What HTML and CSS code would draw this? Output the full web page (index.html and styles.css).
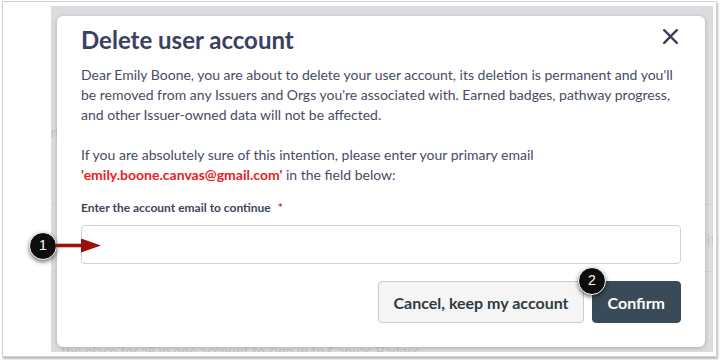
FILE: index.html
```html
<!DOCTYPE html>
<html lang="en">
<head>
<meta charset="utf-8">
<title>Delete user account</title>
<link rel="stylesheet" href="styles.css">
</head>
<body>
<div class="frame">
  <div class="overlay">
    <div class="bg-page">
      <div class="bg-word">in</div>
      <div class="bg-field"><span class="bg-field-text">if</span></div>
      <div class="bg-foot">the place for all in one account to sign in to Canvas Badges.</div>
    </div>
    <div class="modal">
      <div class="modal-head">
        <h1 class="title">Delete user account</h1>
        <button class="close" aria-label="Close">
          <svg width="15" height="15" viewBox="0 0 15 15"><path d="M1.2 1.2 L13.8 13.8 M13.8 1.2 L1.2 13.8" stroke="#3a4062" stroke-width="2.4" stroke-linecap="round" fill="none"/></svg>
        </button>
      </div>
      <p class="text">Dear Emily Boone, you are about to delete your user account, its deletion is permanent and you'll be removed from any Issuers and Orgs you're associated with. Earned badges, pathway progress, and other Issuer-owned data will not be affected.</p>
      <p class="text text-gap">If you are absolutely sure of this intention, please enter your primary email <strong class="email">'emily.boone.canvas@gmail.com'</strong> in the field below:</p>
      <label class="label" for="em">Enter the account email to continue <span class="req">*</span></label>
      <input class="field" id="em" type="text">
      <div class="actions">
        <button class="btn btn-cancel">Cancel, keep my account</button>
        <button class="btn btn-confirm">Confirm</button>
      </div>
    </div>
  </div>
</div>
<div class="badge badge-1">1</div>
<svg class="arrow" width="46" height="18" viewBox="0 0 46 18"><path d="M0 8.5 H28" stroke="#9b0f0f" stroke-width="3.6" fill="none"/><path d="M25 1.5 L45 8.5 L25 15.5 Z" fill="#9b0f0f"/></svg>
<div class="badge badge-2">2</div>
</body>
</html>
```
FILE: styles.css
```css
html, body {
  margin: 0;
  padding: 0;
  background: #ffffff;
}
body {
  font-family: Lato, "Open Sans", sans-serif;
  width: 720px;
  height: 360px;
  position: relative;
  overflow: hidden;
}
.frame {
  margin: 1px 0 0 2px;
  width: 715px;
  height: 356px;
  box-sizing: border-box;
  border: 1px solid #d2d2d2;
  box-shadow: 1px 2px 2px rgba(0, 0, 0, 0.28);
  padding: 4px 3px 4px 48px;
  background: #ffffff;
}
.overlay {
  position: relative;
  height: 100%;
  background: #dbdcdf;
  overflow: hidden;
}
.bg-page {
  display: flex;
  flex-direction: column;
  height: 100%;
  color: #c3c4c8;
  font-size: 15px;
}
.bg-word {
  margin: 116px 0 0 -4px;
  line-height: 20px;
}
.bg-field {
  margin: 62px 0 0 -20px;
  height: 66px;
  border-top: 1px solid #d0d1d4;
  border-bottom: 1px solid #d0d1d4;
  display: flex;
  align-items: center;
  justify-content: flex-end;
}
.bg-field-text {
  margin-right: -3px;
  font-size: 16px;
}
.bg-foot {
  margin: auto 0 -7px 10px;
  line-height: 16px;
  font-size: 14px;
}
.modal {
  position: absolute;
  left: 6px;
  top: 10px;
  right: 8px;
  bottom: 5px;
  background: #ffffff;
  border-radius: 6px;
  box-shadow: 0 1px 4px rgba(0, 0, 0, 0.22);
  padding: 9px 24px 24px 24px;
  display: flex;
  flex-direction: column;
  box-sizing: border-box;
}
.modal-head {
  display: flex;
  justify-content: space-between;
  align-items: flex-start;
}
.title {
  margin: 0;
  font-size: 24px;
  line-height: 30px;
  font-weight: 700;
  color: #3a4062;
}
.close {
  width: 22px;
  height: 22px;
  margin: 0;
  padding: 0;
  border: 0;
  background: transparent;
  display: flex;
  align-items: center;
  justify-content: center;
}
.text {
  margin: 10px 0 0 0;
  font-size: 14px;
  line-height: 20px;
  color: #474c63;
}
.text-gap {
  margin-top: 20px;
}
.email {
  color: #e8211e;
  font-weight: 700;
}
.label {
  margin-top: 15px;
  font-size: 12px;
  line-height: 16px;
  font-weight: 700;
  color: #3f4560;
}
.req {
  color: #e8211e;
  margin-left: 4px;
}
.field {
  margin: 9px 0 0 0;
  height: 39px;
  box-sizing: border-box;
  border: 1px solid #cfd3d9;
  border-radius: 4px;
  background: #ffffff;
  padding: 0 10px;
  font: inherit;
}
.actions {
  margin-top: 17px;
  display: flex;
  justify-content: flex-end;
  gap: 8px;
}
.btn {
  height: 42px;
  box-sizing: border-box;
  padding: 0 15px;
  border-radius: 4px;
  font-family: Lato, "Open Sans", sans-serif;
  font-size: 16px;
  font-weight: 700;
}
.btn-cancel {
  padding: 0 14px;
  background: #f5f5f5;
  border: 1px solid #c7cdd1;
  color: #2d3b45;
}
.btn-confirm {
  background: #394b58;
  border: 1px solid #394b58;
  color: #ffffff;
}
.badge {
  position: absolute;
  width: 28px;
  height: 28px;
  box-sizing: border-box;
  border-radius: 50%;
  background: #0d0d0d;
  border: 1.5px solid #ffffff;
  box-shadow: 0 2px 4px rgba(0, 0, 0, 0.55);
  color: #ffffff;
  font-family: "Liberation Sans", Arial, sans-serif;
  font-size: 14px;
  line-height: 25px;
  text-align: center;
}
.badge-1 {
  left: 29px;
  top: 232px;
}
.badge-2 {
  left: 578px;
  top: 267px;
}
.arrow {
  position: absolute;
  left: 56px;
  top: 237px;
}
```
